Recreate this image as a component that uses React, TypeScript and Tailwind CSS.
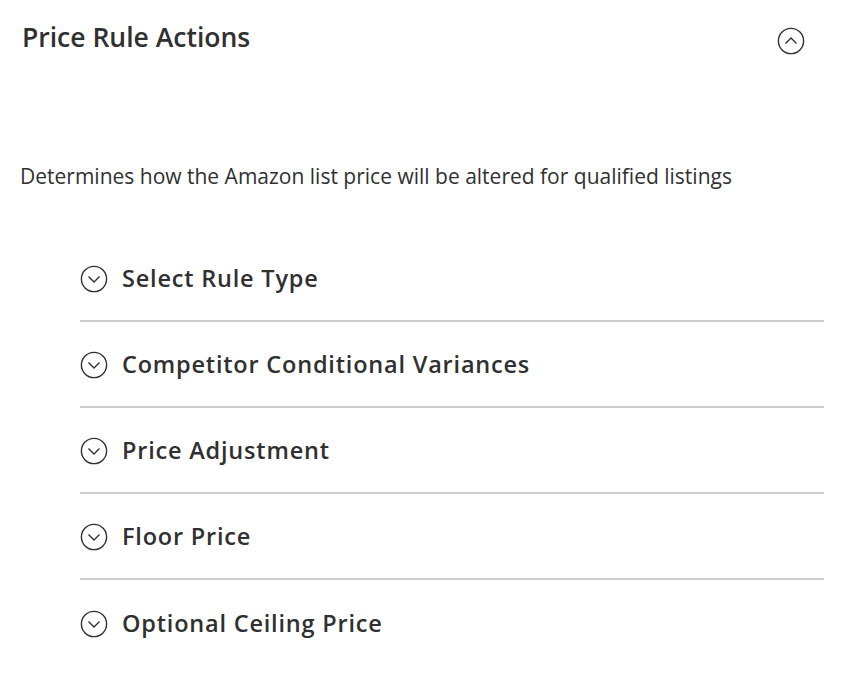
import React from "react";

const ChevronCircle = ({ up = false }: { up?: boolean }) => (
  <svg width="28" height="28" viewBox="0 0 28 28" fill="none" className="shrink-0">
    <circle cx="14" cy="14" r="12.6" stroke="#303030" strokeWidth="1.4" />
    {up ? (
      <path d="M8.5 16.5 L14 11 L19.5 16.5" stroke="#303030" strokeWidth="1.4" />
    ) : (
      <path d="M8.5 11.5 L14 17 L19.5 11.5" stroke="#303030" strokeWidth="1.4" />
    )}
  </svg>
);

const items = [
  "Select Rule Type",
  "Competitor Conditional Variances",
  "Price Adjustment",
  "Floor Price",
  "Optional Ceiling Price",
];

export default function App() {
  return (
    <div
      className="w-[865px] h-[698px] bg-white text-[#303030]"
      style={{ fontFamily: '"Open Sans", sans-serif' }}
    >
      <div className="flex items-start justify-between pl-[22px] pr-[60px] pt-[18px]">
        <h2 className="text-[26.5px] font-semibold leading-[38px]">Price Rule Actions</h2>
        <div className="mt-[9px]">
          <ChevronCircle up />
        </div>
      </div>
      <p className="pl-[20px] mt-[104px] text-[21px] leading-[32px]">
        Determines how the Amazon list price will be altered for qualified listings
      </p>
      <div className="ml-[80px] mr-[41px] mt-[44px]">
        {items.map((t, i) => (
          <div
            key={t}
            className={`flex items-center gap-[14px] h-[86px] pt-[1px] ${
              i < items.length - 1 ? "border-b-2 border-[#cccccc]" : ""
            }`}
          >
            <ChevronCircle />
            <span className="text-[23.5px] font-semibold tracking-[0.8px]">{t}</span>
          </div>
        ))}
      </div>
    </div>
  );
}
